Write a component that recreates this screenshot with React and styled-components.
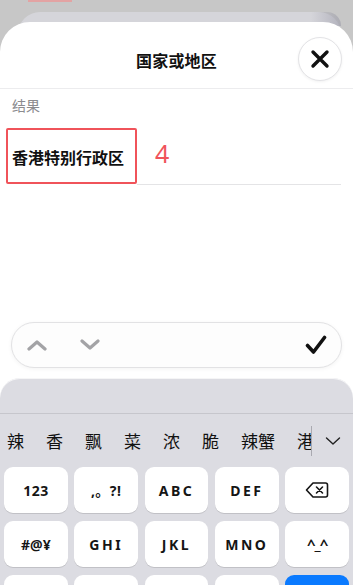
import React from "react";
import styled, { createGlobalStyle } from "styled-components";

const Global = createGlobalStyle`
  html, body { margin: 0; padding: 0; }
  body { font-family: "Noto Sans CJK SC", "Noto Sans", sans-serif; background: #c7c7c7; }
  * { box-sizing: border-box; }
`;

const Page = styled.div`
  width: 353px;
  height: 585px;
  overflow: hidden;
  background: #c7c7c7;
  display: flex;
  flex-direction: column;
`;

const TopStrip = styled.div`
  height: 12px;
  padding-left: 28px;
  flex: none;
`;

const RedMark = styled.div`
  width: 44px;
  height: 2px;
  background: #e3a3a3;
`;

const BackSheet = styled.div`
  flex: none;
  height: 30px;
  margin: 0 12px -20px 18px;
  background: #d5d5da;
  border-radius: 22px 22px 0 0;
  display: flex;
  justify-content: flex-end;
`;

const BackShadow = styled.div`
  width: 30px;
  height: 14px;
  border-radius: 0 22px 0 0;
  background: linear-gradient(90deg, rgba(150,150,160,0) 0%, rgba(150,150,165,0.55) 100%);
`;

const Sheet = styled.div`
  position: relative;
  flex: 1;
  background: #fff;
  border-radius: 30px 30px 0 0;
  display: flex;
  flex-direction: column;
  min-height: 0;
`;

const Header = styled.div`
  position: relative;
  height: 67px;
  flex: none;
  padding-top: 9px;
  display: flex;
  align-items: center;
  justify-content: center;
  border-bottom: 1px solid #ececee;
`;

const Title = styled.div`
  font-size: 16px;
  font-weight: 700;
  color: #111;
  letter-spacing: 0.2px;
`;

const CloseButton = styled.div`
  position: absolute;
  right: 11px;
  top: 15px;
  width: 44px;
  height: 44px;
  border-radius: 50%;
  background: #fff;
  border: 1px solid #e3e3e6;
  box-shadow: 0 1px 3px rgba(0, 0, 0, 0.06);
  display: flex;
  align-items: center;
  justify-content: center;
`;

const Body = styled.div`
  flex: 1;
  padding: 6px 12px 0 6px;
`;

const Label = styled.div`
  padding-left: 6px;
  font-size: 14px;
  color: #8b8b8f;
  line-height: 20px;
`;

const ResultRow = styled.div`
  margin-top: 13px;
  display: flex;
  align-items: flex-start;
`;

const ResultBox = styled.div`
  width: 131px;
  height: 56px;
  border: 2px solid #f0535a;
  border-radius: 2px;
  display: flex;
  align-items: center;
  padding-left: 4px;
  padding-top: 2px;
  font-size: 16px;
  font-weight: 600;
  color: #111;
  flex: none;
`;

const FieldLine = styled.div`
  flex: 1;
  height: 57px;
  border-bottom: 1px solid #e4e4e6;
  display: flex;
  align-items: flex-start;
  padding-left: 18px;
  padding-top: 10px;
`;

const Count = styled.div`
  font-family: "Noto Sans", sans-serif;
  font-size: 25px;
  line-height: 30px;
  color: #f0535a;
`;

const Toolbar = styled.div`
  flex: none;
  height: 46px;
  margin: 0 11px 10px 11px;
  border-radius: 23px;
  border: 1px solid #e2e2e4;
  background: #fdfdfd;
  box-shadow: 0 1px 4px rgba(0, 0, 0, 0.05);
  display: flex;
  align-items: center;
  padding: 0 14px 0 15px;
`;

const NavGroup = styled.div`
  display: flex;
  align-items: center;
  gap: 33px;
  flex: 1;
`;

const Keyboard = styled.div`
  flex: none;
  height: 207px;
  background: #dcdce2;
  border-radius: 20px 20px 0 0;
  box-shadow: inset 0 1px 0 rgba(255, 255, 255, 0.7);
  display: flex;
  flex-direction: column;
  overflow: hidden;
`;

const PinyinArea = styled.div`
  height: 36px;
  flex: none;
  border-bottom: 1px solid #c6c6cc;
`;

const CandidateBar = styled.div`
  height: 53px;
  flex: none;
  display: flex;
  align-items: center;
`;

const CandidateScroll = styled.div`
  width: 312px;
  overflow: hidden;
  display: flex;
  gap: 22px;
  padding-left: 7px;
  flex: none;
  border-right: 1px solid #a9a9b0;
  height: 30px;
  align-items: center;
  white-space: nowrap;
`;

const Candidate = styled.span`
  font-size: 17px;
  color: #111;
  flex: none;
`;

const Expand = styled.div`
  flex: 1;
  display: flex;
  justify-content: center;
`;

const KeyGrid = styled.div`
  display: grid;
  grid-template-columns: repeat(5, 1fr);
  column-gap: 6.5px;
  row-gap: 8px;
  padding: 0 4px;
`;

const Key = styled.div`
  height: 46px;
  border-radius: 9px;
  background: ${(p) => (p.$primary ? "#0a7aff" : "#fff")};
  box-shadow: 0 1px 0 rgba(0, 0, 0, 0.12);
  display: flex;
  align-items: center;
  justify-content: center;
  font-family: "Noto Sans", "Noto Sans CJK SC", sans-serif;
  font-size: 14px;
  font-weight: 700;
  color: #151515;
  letter-spacing: ${(p) => p.$spacing || "0.5px"};
`;

const Emote = styled.span`
  font-size: 15px;
  letter-spacing: -1px;
  line-height: 1;
`;

const Chevron = ({ up, color = "#a3a3a6" }) => (
  <svg width="20" height="12" viewBox="0 0 20 12">
    <path
      d={up ? "M2 10 L10 3 L18 10" : "M2 2 L10 9 L18 2"}
      fill="none"
      stroke={color}
      strokeWidth="3.2"
      strokeLinecap="round"
      strokeLinejoin="round"
    />
  </svg>
);

const Check = () => (
  <svg width="22" height="20" viewBox="0 0 22 20">
    <path
      d="M2.5 10.5 L8.5 17 L19.5 2.5"
      fill="none"
      stroke="#111"
      strokeWidth="3.6"
      strokeLinecap="round"
      strokeLinejoin="round"
    />
  </svg>
);

const CloseX = () => (
  <svg width="20" height="20" viewBox="0 0 20 20">
    <path
      d="M3 3 L17 17 M17 3 L3 17"
      stroke="#111"
      strokeWidth="3.4"
      strokeLinecap="round"
    />
  </svg>
);

const SmallChevron = () => (
  <svg width="16" height="10" viewBox="0 0 16 10">
    <path d="M1.5 2 L8 8 L14.5 2" fill="none" stroke="#222" strokeWidth="1.4" strokeLinecap="round" strokeLinejoin="round" />
  </svg>
);

const Backspace = () => (
  <svg width="24" height="18" viewBox="0 0 24 18">
    <path
      d="M8 2 H20.5 A2 2 0 0 1 22.5 4 V14 A2 2 0 0 1 20.5 16 H8 L1.5 9 Z"
      fill="none"
      stroke="#151515"
      strokeWidth="1.6"
      strokeLinejoin="round"
    />
    <path d="M11.5 6 L17.5 12 M17.5 6 L11.5 12" stroke="#151515" strokeWidth="1.6" strokeLinecap="round" />
  </svg>
);

const candidates = ["辣", "香", "飘", "菜", "浓", "脆", "辣蟹", "港"];

const keys = [
  { label: "123" },
  { label: ",。?!", spacing: "0.5px" },
  { label: "ABC", spacing: "2.5px" },
  { label: "DEF", spacing: "2.5px" },
  { icon: "back" },
  { label: "#@¥", spacing: "0px" },
  { label: "GHI", spacing: "2.5px" },
  { label: "JKL", spacing: "2.5px" },
  { label: "MNO", spacing: "2.5px" },
  { icon: "emote" },
  { label: "" },
  { label: "" },
  { label: "" },
  { label: "" },
  { label: "", primary: true },
];

export default function App() {
  return (
    <Page>
      <Global />
      <TopStrip>
        <RedMark />
      </TopStrip>
      <BackSheet>
        <BackShadow />
      </BackSheet>
      <Sheet>
        <Header>
          <Title>国家或地区</Title>
          <CloseButton>
            <CloseX />
          </CloseButton>
        </Header>
        <Body>
          <Label>结果</Label>
          <ResultRow>
            <ResultBox>香港特别行政区</ResultBox>
            <FieldLine>
              <Count>4</Count>
            </FieldLine>
          </ResultRow>
        </Body>
        <Toolbar>
          <NavGroup>
            <Chevron up />
            <Chevron />
          </NavGroup>
          <Check />
        </Toolbar>
        <Keyboard>
          <PinyinArea />
          <CandidateBar>
            <CandidateScroll>
              {candidates.map((c, i) => (
                <Candidate key={i}>{c}</Candidate>
              ))}
            </CandidateScroll>
            <Expand>
              <SmallChevron />
            </Expand>
          </CandidateBar>
          <KeyGrid>
            {keys.map((k, i) => (
              <Key key={i} $primary={k.primary} $spacing={k.spacing}>
                {k.icon === "back" ? (
                  <Backspace />
                ) : k.icon === "emote" ? (
                  <Emote>^_^</Emote>
                ) : (
                  k.label
                )}
              </Key>
            ))}
          </KeyGrid>
        </Keyboard>
      </Sheet>
    </Page>
  );
}
